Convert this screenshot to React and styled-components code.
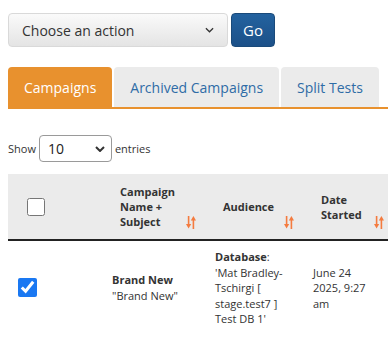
import React from "react";
import styled, { createGlobalStyle } from "styled-components";

const orange = "#e8912e";
const blue = "#2f6ca6";
const grey = "#ebebeb";

const GlobalStyle = createGlobalStyle`
  html, body {
    margin: 0;
    padding: 0;
    overflow: hidden;
    background: #ffffff;
    font-family: "Open Sans", "Liberation Sans", sans-serif;
    color: #333333;
  }
`;

const Page = styled.div`
  padding: 13px 0 0 8px;
  width: 400px;
`;

const ActionBar = styled.div`
  display: flex;
  gap: 3px;
  height: 34px;
`;

const ActionSelect = styled.div`
  width: 220px;
  box-sizing: border-box;
  display: flex;
  align-items: center;
  justify-content: space-between;
  padding: 0 13px 0 13px;
  border: 1px solid #d9d9d9;
  border-radius: 4px;
  background: linear-gradient(180deg, #fafafa 0%, #e4e4e4 100%);
  font-size: 14px;
  color: #333;
`;

const GoButton = styled.button`
  width: 44px;
  border: 1px solid #1a4a7a;
  border-radius: 4px;
  background: linear-gradient(180deg, #23629f 0%, #1c5088 100%);
  color: #fff;
  font-family: inherit;
  font-size: 15px;
  padding: 0;
`;

const Tabs = styled.div`
  display: flex;
  gap: 2px;
  margin-top: 20px;
  border-bottom: 2px solid ${orange};
`;

const Tab = styled.div`
  height: 40px;
  display: flex;
  align-items: center;
  padding: 0 16px;
  border-radius: 4px 4px 0 0;
  font-size: 14px;
  background: ${(p) => (p.$active ? orange : grey)};
  color: ${(p) => (p.$active ? "#ffffff" : blue)};
`;

const LengthRow = styled.div`
  display: flex;
  align-items: center;
  gap: 3px;
  margin-top: 26px;
  font-size: 11px;
`;

const LengthSelect = styled.div`
  width: 73px;
  height: 27px;
  box-sizing: border-box;
  display: flex;
  align-items: center;
  justify-content: space-between;
  padding: 0 6px 0 8px;
  border: 1px solid #9a9a9a;
  border-radius: 4px;
  font-size: 14px;
  color: #222;
`;

const Table = styled.table`
  margin-top: 12px;
  width: 387px;
  table-layout: fixed;
  border-collapse: collapse;
  font-size: 11px;
`;

const HeadCell = styled.th`
  position: relative;
  background: ${grey};
  text-align: left;
  font-weight: 700;
  line-height: 15px;
  padding: 10px 8px 10px 16px;
  height: 45px;
  vertical-align: middle;
  border-bottom: 2px solid #222;
  color: #333;
`;

const BodyCell = styled.td`
  padding: 8px 16px 8px 8px;
  line-height: 15.6px;
  vertical-align: middle;
`;

const CheckCell = styled.td`
  padding: 0 0 0 10px;
  vertical-align: middle;
`;

const HeadCheckCell = styled.th`
  background: ${grey};
  border-bottom: 2px solid #222;
  padding: 0 0 0 19px;
  text-align: left;
  vertical-align: middle;
`;

const Check = styled.input.attrs({ type: "checkbox" })`
  width: ${(p) => p.$size}px;
  height: ${(p) => p.$size}px;
  margin: 0;
  display: block;
  accent-color: #1a78f2;
`;

const SortMark = styled.span`
  position: absolute;
  right: 11px;
  bottom: 10px;
  display: block;
  width: 10px;
  height: 13px;
`;

const Chevron = ({ w = 9, stroke = 1.4 }) => (
  <svg width={w} height={6} viewBox="0 0 10 6">
    <path d="M1 1l4 4 4-4" fill="none" stroke="#333" strokeWidth={stroke} />
  </svg>
);

const Sort = () => (
  <SortMark>
    <svg width="10" height="13" viewBox="0 0 10 13">
      <g fill="#f47b3f">
        <rect x="1.8" y="0" width="1.6" height="9" />
        <path d="M0 8h5.2L2.6 12.5z" />
        <rect x="6.6" y="4" width="1.6" height="9" />
        <path d="M4.8 4.5h5.2L7.4 0z" />
      </g>
    </svg>
  </SortMark>
);

export default function App() {
  return (
    <Page>
      <GlobalStyle />
      <ActionBar>
        <ActionSelect>
          Choose an action
          <Chevron />
        </ActionSelect>
        <GoButton>Go</GoButton>
      </ActionBar>
      <Tabs>
        <Tab $active>Campaigns</Tab>
        <Tab>Archived Campaigns</Tab>
        <Tab>Split Tests</Tab>
      </Tabs>
      <LengthRow>
        Show
        <LengthSelect>
          10
          <Chevron w={10} stroke={2} />
        </LengthSelect>
        entries
      </LengthRow>
      <Table>
        <colgroup>
          <col style={{ width: 96 }} />
          <col style={{ width: 103 }} />
          <col style={{ width: 98 }} />
          <col style={{ width: 90 }} />
        </colgroup>
        <thead>
          <tr>
            <HeadCheckCell>
              <Check $size={18} readOnly />
            </HeadCheckCell>
            <HeadCell>
              Campaign Name + Subject
              <Sort />
            </HeadCell>
            <HeadCell>
              Audience
              <Sort />
            </HeadCell>
            <HeadCell>
              Date Started
              <Sort />
            </HeadCell>
          </tr>
        </thead>
        <tbody>
          <tr>
            <CheckCell>
              <Check $size={19} checked readOnly />
            </CheckCell>
            <BodyCell>
              <b>Brand New</b>
              <br />
              "Brand New"
            </BodyCell>
            <BodyCell>
              <b>Database</b>:
              <br />
              'Mat Bradley-Tschirgi [ stage.test7 ] Test DB 1'
            </BodyCell>
            <BodyCell>June 24 2025, 9:27 am</BodyCell>
          </tr>
        </tbody>
      </Table>
    </Page>
  );
}
